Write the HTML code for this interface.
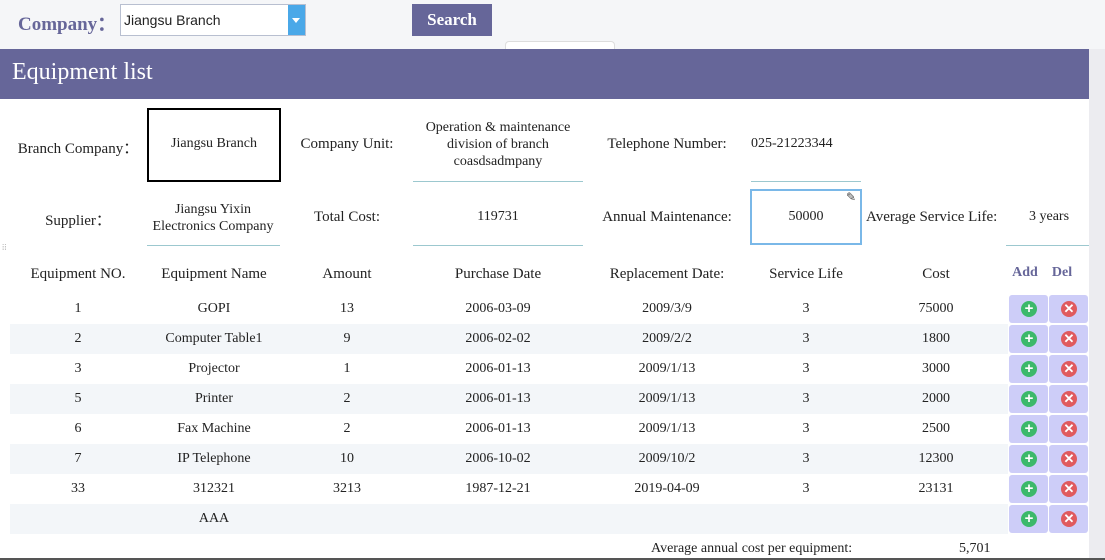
<!DOCTYPE html>
<html><head><meta charset="utf-8"><style>
*{margin:0;padding:0;box-sizing:border-box}
body{width:1105px;height:560px;overflow:hidden;background:#ececf0;font-family:"Liberation Serif",serif;font-size:15px;color:#222;position:relative}
.a{position:absolute;white-space:nowrap}
.c{transform:translateX(-50%);text-align:center}
.top{position:absolute;left:0;top:0;width:1105px;height:49px;background:#f5f6f8}
.band{position:absolute;left:0;top:49px;width:1089px;height:50px;background:#666699;color:#fff;font-size:24px;padding:10px 0 0 12px}
.main{position:absolute;left:0;top:99px;width:1089px;height:459px;background:#fff}
.ul{position:absolute;height:1px;background:#9cc8cf}
.stripe{position:absolute;left:10px;width:998px;height:30px;background:#f3f6f9}
.btn{position:absolute;width:39px;height:28px;background:#cdcdf8;border-radius:3px}
.ic{position:absolute;left:12px;top:6px;width:16px;height:16px;border-radius:50%;color:#fff;font:bold 15px/16px "Liberation Sans",sans-serif;text-align:center}
</style></head><body>
<div class="top"></div>
<div class="a" style="left:18px;top:9px;font-size:19px;font-weight:bold;color:#666699">Company：</div>
<div class="a" style="left:120px;top:4px;width:186px;height:32px;background:#fff;border:1px solid #b8bfd0;font:14px/30px 'Liberation Sans',sans-serif;padding-left:3px">Jiangsu Branch</div>
<div class="a" style="left:288px;top:5px;width:17px;height:30px;background:#4aa8e8"><div style="position:absolute;left:4px;top:13px;border:4px solid transparent;border-top:5px solid #fff"></div></div>
<div class="a" style="left:412px;top:4px;width:80px;height:32px;background:#666699;color:#fff;font-weight:bold;font-size:17px;text-align:center;line-height:31px">Search</div>
<div class="a" style="left:505px;top:41px;width:110px;height:8px;border:1px solid #ddd;border-bottom:none;border-radius:4px 4px 0 0;background:#fff"></div>
<div class="band">Equipment list</div>
<div class="main"></div>
<div class="a" style="left:0;top:558px;width:1105px;height:2px;background:#555"></div>

<div class="a c" style="left:78px;top:137px">Branch Company：</div>
<div class="a" style="left:147px;top:108px;width:134px;height:74px;border:2px solid #000;text-align:center;padding-top:26px;font-size:14px">Jiangsu Branch</div>
<div class="a c" style="left:347px;top:136px">Company Unit:</div>
<div class="a c" style="left:498px;top:119px;font-size:14px;line-height:17px">Operation &amp; maintenance<br>division of branch<br>coasdsadmpany</div>
<div class="ul" style="left:413px;top:181px;width:170px"></div>
<div class="a c" style="left:667px;top:136px">Telephone Number:</div>
<div class="a" style="left:751px;top:136px;font-size:14px">025-21223344</div>
<div class="ul" style="left:751px;top:181px;width:110px"></div>

<div class="a c" style="left:78px;top:209px">Supplier：</div>
<div class="a c" style="left:213px;top:201px;font-size:14px;line-height:17px">Jiangsu Yixin<br>Electronics Company</div>
<div class="ul" style="left:147px;top:245px;width:133px"></div>
<div class="a c" style="left:347px;top:209px">Total Cost:</div>
<div class="a c" style="left:498px;top:209px;font-size:14px">119731</div>
<div class="ul" style="left:413px;top:245px;width:170px"></div>
<div class="a c" style="left:667px;top:209px">Annual Maintenance:</div>
<div class="a" style="left:750px;top:189px;width:112px;height:56px;border:2px solid #7ab8e8;text-align:center;padding-top:18px;font-size:14px">50000<span style="position:absolute;right:4px;top:-1px;font-size:12px;color:#444">✎</span></div>
<div class="a" style="left:866px;top:209px">Average Service Life:</div>
<div class="a c" style="left:1049px;top:209px;font-size:14px">3 years</div>
<div class="ul" style="left:1006px;top:245px;width:83px"></div>
<div class="a" style="left:2px;top:243px;font-size:8px;color:#aaa">⁞⁞</div>

<div class="a c" style="left:78px;top:266px">Equipment NO.</div>
<div class="a c" style="left:214px;top:266px">Equipment Name</div>
<div class="a c" style="left:347px;top:266px">Amount</div>
<div class="a c" style="left:498px;top:266px">Purchase Date</div>
<div class="a c" style="left:667px;top:266px">Replacement Date:</div>
<div class="a c" style="left:806px;top:266px">Service Life</div>
<div class="a c" style="left:936px;top:266px">Cost</div>
<div class="a c" style="left:1025px;top:265px;font-weight:bold;color:#666699;font-size:14px">Add</div>
<div class="a c" style="left:1062px;top:265px;font-weight:bold;color:#666699;font-size:14px">Del</div>

<div class="stripe" style="top:324px"></div>
<div class="stripe" style="top:384px"></div>
<div class="stripe" style="top:444px"></div>
<div class="stripe" style="top:504px"></div>

<div id="rows"></div>
<script>
var d=[["1","GOPI","13","2006-03-09","2009/3/9","3","75000"],["2","Computer Table1","9","2006-02-02","2009/2/2","3","1800"],["3","Projector","1","2006-01-13","2009/1/13","3","3000"],["5","Printer","2","2006-01-13","2009/1/13","3","2000"],["6","Fax Machine","2","2006-01-13","2009/1/13","3","2500"],["7","IP Telephone","10","2006-10-02","2009/10/2","3","12300"],["33","312321","3213","1987-12-21","2019-04-09","3","23131"],["","AAA","","","","",""]];
var x=[78,214,347,498,667,806,936],h="";
d.forEach(function(r,i){var t=294+i*30;r.forEach(function(v,j){h+='<div class="a c" style="left:'+x[j]+'px;top:'+(t+7)+'px;font-size:14px">'+v+'</div>'});
h+='<div class="btn" style="left:1009px;top:'+(t+1)+'px"><div class="ic" style="background:#3cb96a">+</div></div>';
h+='<div class="btn" style="left:1049px;top:'+(t+1)+'px"><div class="ic" style="background:#e05a5e;font-size:13px">✕</div></div>';});
document.getElementById("rows").innerHTML=h;
</script>
<div class="a" style="left:651px;top:541px;font-size:14px">Average annual cost per equipment:</div>
<div class="a" style="left:959px;top:541px;font-size:14px">5,701</div>
</body></html>
